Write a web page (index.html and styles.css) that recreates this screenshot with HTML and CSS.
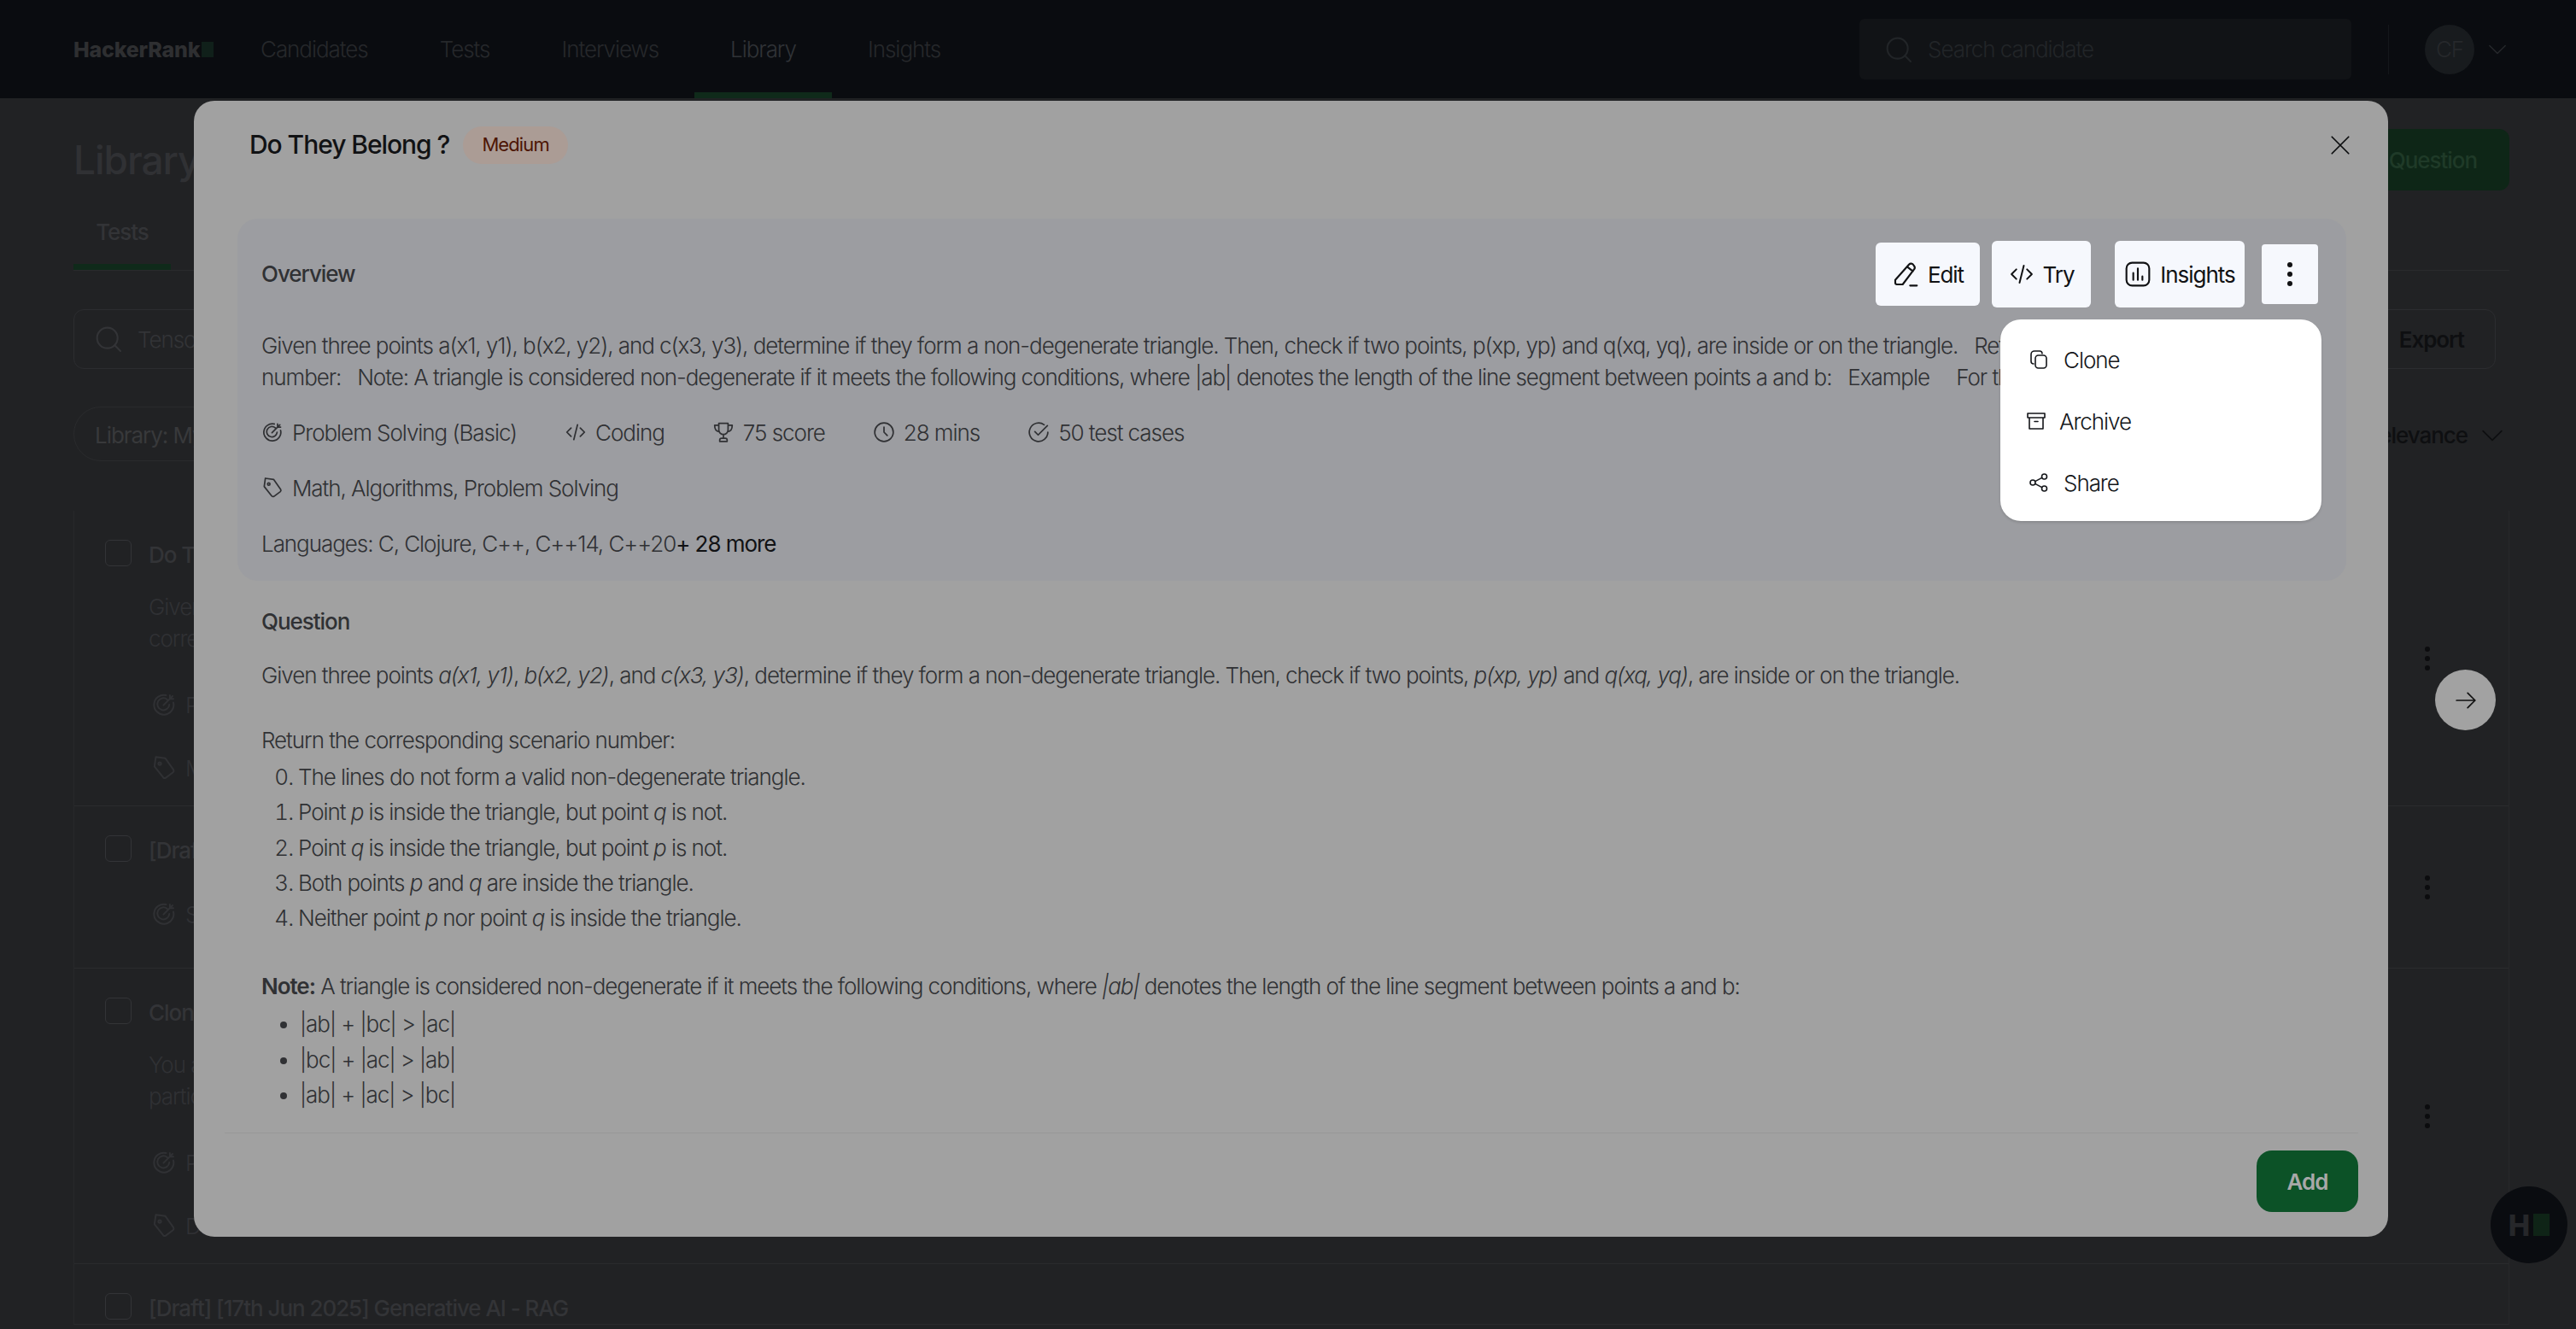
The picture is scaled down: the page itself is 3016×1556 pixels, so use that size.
FILE: index.html
```html
<!DOCTYPE html>
<html lang="en">

<head>
  <meta charset="UTF-8">
  <title>Library - HackerRank</title>
  <link rel="stylesheet" href="styles.css">
</head>

<body>
  <svg class="sprite" width="0" height="0">
    <symbol id="i-target" viewBox="0 0 24 24"><path d="M14 3.2A9.2 9.2 0 1 0 20.8 10M15 7.2A5.6 5.6 0 1 0 17 12M11.5 12.5 20 4M17.5 3.2v3.3h3.3"/></symbol>
    <symbol id="i-code" viewBox="0 0 24 24"><path d="M7 7.5 2.5 12 7 16.500M17 7.500 21.500 12 17 16.500M14 4l-4 16"/></symbol>
    <symbol id="i-trophy" viewBox="0 0 24 24"><path d="M7 2.500h10v7a5 5 0 0 1-10 0zM7 4.500H2.500c0 4 1.500 6.500 5 7M17 4.500h4.500c0 4-1.500 6.500-5 7M12 14.500v4M8 22v-1.500a2 2 0 0 1 2-2h4a2 2 0 0 1 2 2V22z"/></symbol>
    <symbol id="i-clock" viewBox="0 0 24 24"><circle cx="12" cy="12" r="10"/><path d="M12 6.500V12l3.500 3.500"/></symbol>
    <symbol id="i-check" viewBox="0 0 24 24"><path d="M18 4A10 10 0 1 0 22 12M8 11.500l3.500 3.500L21.500 5"/></symbol>
    <symbol id="i-tag" viewBox="0 0 24 24"><path d="M3 3h9l9 9.500a2 2 0 0 1 0 2.500l-6 6a2 2 0 0 1-2.500 0L3 12z" transform="rotate(8 12 12)"/><circle cx="8" cy="8" r="1.300"/></symbol>
    <symbol id="i-pen" viewBox="0 0 24 24"><path d="M15 3.500a2.500 2.500 0 0 1 4 .5l.7 1a2.500 2.500 0 0 1-.5 3.200L9.500 21H4.500a1.500 1.500 0 0 1-1.500-1.500V17zM13.500 5.500l5 4M16 22h6"/></symbol>
    <symbol id="i-chart" viewBox="0 0 24 24"><rect x="2" y="2" width="20" height="20" rx="5"/><path d="M8 11v6M12 7v10M16 14v3"/></symbol>
    <symbol id="i-copy" viewBox="0 0 24 24"><path d="M6 17A3 3 0 0 1 3 14V6a4 4 0 0 1 4-4h6a3 3 0 0 1 3 3"/><rect x="8" y="7" width="13" height="15" rx="3.500"/></symbol>
    <symbol id="i-archive" viewBox="0 0 24 24"><path d="M2 3h20v5H2zM4 8v13h16V8M10 12.500h4"/></symbol>
    <symbol id="i-share" viewBox="0 0 24 24"><circle cx="5" cy="12" r="3"/><circle cx="18.500" cy="5" r="3"/><circle cx="18.500" cy="19" r="3"/><path d="m7.700 10.600 8-4.200M7.700 13.400l8 4.200"/></symbol>
    <symbol id="i-search" viewBox="0 0 24 24"><circle cx="11" cy="11" r="9"/><path d="m17.500 17.500 5 5"/></symbol>
    <symbol id="i-chevron" viewBox="0 0 24 24"><path d="m2 7 10 10L22 7"/></symbol>
    <symbol id="i-close" viewBox="0 0 24 24"><path d="M3 3l18 18M21 3 3 21"/></symbol>
    <symbol id="i-arrow" viewBox="0 0 24 24"><path d="M2 12h20M14 4l8 8-8 8"/></symbol>
  </svg>

  <!-- page behind the modal -->
  <header class="topbar">
    <div class="logo">HackerRank<span class="logo-mark"></span></div>
    <nav class="topnav">
      <a>Candidates</a>
      <a>Tests</a>
      <a>Interviews</a>
      <a class="active">Library</a>
      <a>Insights</a>
    </nav>
    <div class="top-search">
      <svg class="icon"><use href="#i-search"/></svg>
      <span>Search candidate</span>
    </div>
    <div class="top-sep"></div>
    <div class="avatar">CF</div>
    <svg class="icon top-chevron"><use href="#i-chevron"/></svg>
  </header>

  <main class="library">
    <div class="library-head">
      <h1>Library</h1>
      <button class="create-btn">Create Question</button>
    </div>
    <div class="tabs"><span class="tab">Tests</span></div>

    <div class="search-row">
      <svg class="icon"><use href="#i-search"/></svg>
      <span class="search-text">Tensorflow</span>
      <span class="export">Export</span>
    </div>

    <div class="filter-row">
      <span class="chip">Library: My Company</span>
      <span class="sort">Relevance <svg class="icon"><use href="#i-chevron"/></svg></span>
    </div>

    <div class="rows">
      <div class="row">
        <span class="checkbox"></span>
        <div class="row-body">
          <div class="row-title">Do They Belong ?</div>
          <p class="row-desc">Given three points a(x1, y1), b(x2, y2), and c(x3, y3), determine if they form a triangle.<br>corresponding scenario number</p>
          <div class="row-meta first"><svg class="icon"><use href="#i-target"/></svg><span>Problem Solving (Basic)</span></div>
          <div class="row-meta"><svg class="icon"><use href="#i-tag"/></svg><span>Math, Algorithms</span></div>
        </div>
        <span class="row-kebab"><i></i><i></i><i></i></span>
      </div>
      <div class="row">
        <span class="checkbox"></span>
        <div class="row-body">
          <div class="row-title">[Draft] Software Engineer</div>
          <div class="row-meta after-title"><svg class="icon"><use href="#i-target"/></svg><span>Software Engineering</span></div>
        </div>
        <span class="row-kebab"><i></i><i></i><i></i></span>
      </div>
      <div class="row">
        <span class="checkbox"></span>
        <div class="row-body">
          <div class="row-title">Clone of Test</div>
          <p class="row-desc">You are given a list of tasks<br>particular order</p>
          <div class="row-meta first"><svg class="icon"><use href="#i-target"/></svg><span>Problem Solving</span></div>
          <div class="row-meta"><svg class="icon"><use href="#i-tag"/></svg><span>Data Structures</span></div>
        </div>
        <span class="row-kebab"><i></i><i></i><i></i></span>
      </div>
      <div class="row">
        <span class="checkbox"></span>
        <div class="row-body">
          <div class="row-title">[Draft] [17th Jun 2025] Generative AI - RAG</div>
        </div>
      </div>
    </div>
  </main>

  <button class="next-btn"><svg class="icon"><use href="#i-arrow"/></svg></button>
  <div class="chat-widget">H<span class="chat-mark"></span></div>

  <!-- question modal -->
  <section class="modal">
    <div class="modal-head">
      <h2>Do They Belong ?</h2>
      <span class="badge">Medium</span>
      <svg class="icon modal-close"><use href="#i-close"/></svg>
    </div>

    <div class="modal-body">
      <div class="overview">
        <div class="overview-head">
          <h3>Overview</h3>
          <div class="actions">
            <button class="action edit"><svg class="icon"><use href="#i-pen"/></svg>Edit</button>
            <button class="action try"><svg class="icon"><use href="#i-code"/></svg>Try</button>
            <button class="action insights"><svg class="icon"><use href="#i-chart"/></svg>Insights</button>
            <button class="action more"><i></i><i></i><i></i></button>
          </div>
        </div>
        <p class="overview-text">Given three points a(x1, y1), b(x2, y2), and c(x3, y3), determine if they form a non-degenerate triangle. Then, check if two points, p(xp, yp) and q(xq, yq), are inside or on the triangle. &nbsp; Return the corresponding<br>number: &nbsp; Note: A triangle is considered non-degenerate if it meets the following conditions, where |ab| denotes the length of the line segment between points a and b: &nbsp; Example &nbsp; &nbsp; For the points</p>
        <div class="meta">
          <span class="meta-item"><svg class="icon"><use href="#i-target"/></svg>Problem Solving (Basic)</span>
          <span class="meta-item"><svg class="icon"><use href="#i-code"/></svg>Coding</span>
          <span class="meta-item"><svg class="icon"><use href="#i-trophy"/></svg>75 score</span>
          <span class="meta-item"><svg class="icon"><use href="#i-clock"/></svg>28 mins</span>
          <span class="meta-item"><svg class="icon"><use href="#i-check"/></svg>50 test cases</span>
        </div>
        <div class="meta tags">
          <span class="meta-item"><svg class="icon"><use href="#i-tag"/></svg>Math, Algorithms, Problem Solving</span>
        </div>
        <div class="meta langs">Languages: C, Clojure, C++, C++14, C++20<b>+ 28 more</b></div>

        <div class="dropdown">
          <div class="drop-item"><svg class="icon"><use href="#i-copy"/></svg>Clone</div>
          <div class="drop-item archive"><svg class="icon"><use href="#i-archive"/></svg>Archive</div>
          <div class="drop-item"><svg class="icon"><use href="#i-share"/></svg>Share</div>
        </div>
      </div>

      <div class="question">
        <h3>Question</h3>
        <p class="q-first">Given three points <em>a(x1, y1)</em>, <em>b(x2, y2)</em>, and <em>c(x3, y3)</em>, determine if they form a non-degenerate triangle. Then, check if two points, <em>p(xp, yp)</em> and <em>q(xq, yq)</em>, are inside or on the triangle.</p>
        <p class="q-return">Return the corresponding scenario number:</p>
        <ol start="0">
          <li>The lines do not form a valid non-degenerate triangle.</li>
          <li>Point <em>p</em> is inside the triangle, but point <em>q</em> is not.</li>
          <li>Point <em>q</em> is inside the triangle, but point <em>p</em> is not.</li>
          <li>Both points <em>p</em> and <em>q</em> are inside the triangle.</li>
          <li>Neither point <em>p</em> nor point <em>q</em> is inside the triangle.</li>
        </ol>
        <p class="q-note"><strong>Note:</strong> A triangle is considered non-degenerate if it meets the following conditions, where <em>|ab|</em> denotes the length of the line segment between points a and b:</p>
        <ul>
          <li>|ab| + |bc| &gt; |ac|</li>
          <li>|bc| + |ac| &gt; |ab|</li>
          <li>|ab| + |ac| &gt; |bc|</li>
        </ul>
      </div>
    </div>

    <div class="modal-foot">
      <button class="add-btn">Add</button>
    </div>
  </section>
</body>

</html>
```

FILE: styles.css
```css
* {
  box-sizing: border-box;
}

body {
  margin: 0;
  width: 3016px;
  height: 1556px;
  overflow: hidden;
  position: relative;
  background: #212224;
  font-family: Inter, "Noto Sans", sans-serif;
  font-size: 26px;
  font-weight: 300;
  letter-spacing: -1.05px;
  color: #303134;
}

h1, h2, h3, p {
  margin: 0;
}

button {
  font-family: inherit;
  letter-spacing: inherit;
  border: none;
  padding: 0;
}

.sprite {
  position: absolute;
}

.icon {
  width: 26px;
  height: 26px;
  flex: none;
  fill: none;
  stroke: currentColor;
  stroke-width: 1.6;
  stroke-linecap: round;
  stroke-linejoin: round;
}

/* Top bar */
.topbar {
  height: 115px;
  background: #0a0c10;
  display: flex;
  align-items: center;
  padding-left: 86px;
  color: #26282b;
}

.logo {
  width: 177px;
  font-size: 25px;
  font-weight: 800;
  letter-spacing: -0.2px;
  color: #2e2f31;
  display: flex;
  align-items: center;
}

.logo-mark {
  width: 14px;
  height: 18px;
  margin-left: 2px;
  background: #10201a;
}

.topnav {
  display: flex;
  height: 100%;
  align-items: center;
}

.topnav a {
  height: 100%;
  display: flex;
  align-items: center;
  padding: 7px 42px 0;
  border-bottom: 7px solid transparent;
}

.topnav a.active {
  color: #303337;
  border-bottom-color: #0f2a1a;
}

.top-search {
  margin-left: auto;
  width: 576px;
  height: 71px;
  background: #111316;
  border-radius: 6px;
  display: flex;
  align-items: center;
  gap: 18px;
  padding-left: 30px;
  color: #222528;
}

.top-search .icon {
  width: 32px;
  height: 32px;
}

.top-sep {
  width: 1px;
  height: 58px;
  background: #15171a;
  margin-left: 43px;
}

.avatar {
  width: 58px;
  height: 58px;
  margin-left: 42px;
  border-radius: 50%;
  background: #181b1e;
  display: flex;
  align-items: center;
  justify-content: center;
}

.top-chevron {
  width: 22px;
  height: 22px;
  margin: 0 81px 0 16px;
}

/* Library page */
.library {
  padding: 36px 78px 0 86px;
}

.library-head {
  display: flex;
  justify-content: space-between;
  align-items: center;
}

.library-head h1 {
  font-size: 46px;
  font-weight: 500;
  color: #303134;
}

.create-btn {
  width: 320px;
  height: 72px;
  padding-right: 38px;
  text-align: right;
  border-radius: 12px;
  background: #0e2617;
  color: #1f3a28;
  font-size: 26px;
  font-weight: 500;
}

.tabs {
  height: 94px;
  border-bottom: 1px solid #2a2b2d;
  display: flex;
  align-items: flex-end;
}

.tab {
  width: 114px;
  height: 72px;
  padding-top: 12px;
  text-align: center;
  font-weight: 500;
  color: #333437;
  border-bottom: 7px solid #0f2a1a;
}

.search-row {
  margin: 45px 16px 0 0;
  height: 70px;
  border: 1px solid #2c2d30;
  border-radius: 12px;
  display: flex;
  align-items: center;
  padding: 0 36px 0 24px;
  color: #333437;
}

.search-row .icon {
  width: 32px;
  height: 32px;
}

.search-text {
  margin-left: 18px;
}

.export {
  margin-left: auto;
  font-weight: 600;
  color: #0e0f11;
}

.filter-row {
  margin-top: 44px;
  height: 64px;
  display: flex;
  align-items: center;
  justify-content: space-between;
}

.chip {
  height: 64px;
  padding: 3px 24px 0;
  border: 1px solid #2a2b2d;
  border-radius: 32px;
  display: flex;
  align-items: center;
  font-weight: 400;
  color: #38393b;
}

.sort {
  display: flex;
  align-items: center;
  gap: 16px;
  padding-top: 3px;
  font-weight: 500;
  color: #0e0f11;
  margin-right: 7px;
}

.rows {
  margin-top: 58px;
  border-left: 1px solid #27282a;
  border-right: 1px solid #27282a;
}

.row {
  display: flex;
  align-items: flex-start;
  padding: 34px 0 0 36px;
  border-bottom: 1px solid #2a2b2d;
  position: relative;
}

.checkbox {
  width: 31px;
  height: 31px;
  border: 1px solid #333437;
  border-radius: 6px;
  flex: none;
}

.row-body {
  margin-left: 20px;
  flex: 1;
}

.row-title {
  height: 36px;
  line-height: 36px;
  font-weight: 500;
  color: #333437;
}

.row-desc {
  margin-top: 24px;
  line-height: 37px;
  color: #303134;
}

.row-meta {
  display: flex;
  align-items: center;
  gap: 10px;
  height: 36px;
  margin: 38px 0 0 3px;
}

.row-meta .icon {
  width: 30px;
  height: 30px;
}

.row-meta.first {
  margin-top: 41px;
}

.row-meta:last-child {
  margin-bottom: 26px;
}

.row-meta.after-title:last-child {
  margin-bottom: 45px;
}

.row-kebab {
  align-self: center;
  margin: -34px 92px 0 0;
  display: flex;
  flex-direction: column;
  gap: 5px;
}

.row-kebab i {
  width: 6px;
  height: 6px;
  border-radius: 50%;
  background: #0b0c0e;
}

.next-btn {
  position: absolute;
  left: 2851px;
  top: 784px;
  width: 71px;
  height: 71px;
  border-radius: 50%;
  background: #a2a2a2;
  color: #111;
  display: flex;
  align-items: center;
  justify-content: center;
}

.chat-widget {
  position: absolute;
  left: 2916px;
  top: 1389px;
  width: 90px;
  height: 90px;
  border-radius: 50%;
  background: #0a0c10;
  color: #26272a;
  font-size: 34px;
  font-weight: 800;
  letter-spacing: 0;
  display: flex;
  align-items: center;
  justify-content: center;
}

.chat-mark {
  width: 19px;
  height: 26px;
  margin-left: 4px;
  background: #0f2417;
}

/* Modal */
.modal {
  position: absolute;
  left: 227px;
  top: 118px;
  width: 2569px;
  height: 1330px;
  background: #a1a1a1;
  border-radius: 24px;
  overflow: hidden;
  display: flex;
  flex-direction: column;
}

.modal-head {
  height: 138px;
  flex: none;
  display: flex;
  align-items: flex-start;
  padding: 30px 43px 0 65px;
}

.modal-head h2 {
  font-size: 30px;
  font-weight: 500;
  line-height: 42px;
  color: #111214;
}

.badge {
  margin: 0 0 0 16px;
  height: 44px;
  padding: 0 22px;
  border-radius: 22px;
  background: #ab9c95;
  color: #4d1505;
  font-size: 22px;
  font-weight: 400;
  letter-spacing: -0.9px;
  line-height: 43px;
}

.modal-close {
  margin: 9px 0 0 auto;
  color: #0b0c0e;
}

.modal-body {
  flex: 1;
  overflow: hidden;
  margin: 0 49px 0 51px;
}

.overview {
  position: relative;
  height: 424px;
  padding: 26px 33px 0 28px;
  background: #9c9da1;
  border-radius: 24px;
}

.overview-head {
  display: flex;
  justify-content: space-between;
  align-items: center;
  height: 78px;
}

h3 {
  font-size: 26px;
  font-weight: 500;
  line-height: 36px;
  color: #303134;
}

.actions {
  display: flex;
  align-items: center;
}

.action {
  background: #f6f8fd;
  border-radius: 6px;
  display: flex;
  align-items: center;
  justify-content: center;
  gap: 10px;
  color: #111214;
  font-size: 26px;
  font-weight: 400;
}

.action .icon {
  width: 32px;
  height: 32px;
}

.edit {
  width: 122px;
  height: 74px;
}

.try {
  width: 116px;
  height: 78px;
  margin-left: 14px;
}

.try .icon {
  width: 30px;
  height: 30px;
}

.insights {
  width: 152px;
  height: 78px;
  margin-left: 28px;
}

.more {
  width: 66px;
  height: 70px;
  margin-left: 20px;
  flex-direction: column;
  gap: 5px;
  border-radius: 4px;
}

.more i {
  width: 6px;
  height: 6px;
  border-radius: 50%;
  background: #111214;
}

.overview-text {
  margin-top: 26px;
  height: 74px;
  line-height: 37px;
  white-space: nowrap;
  overflow: hidden;
}

.meta {
  display: flex;
  gap: 56px;
  height: 36px;
  align-items: center;
  margin-top: 28px;
}

.tags {
  margin-top: 29px;
}

.langs {
  margin-top: 29px;
  gap: 0;
}

.langs b {
  font-weight: 400;
  color: #111214;
}

.meta-item {
  display: flex;
  align-items: center;
  gap: 10px;
}

.dropdown {
  position: absolute;
  left: 2064px;
  top: 118px;
  width: 376px;
  height: 236px;
  padding-top: 11px;
  background: #fff;
  border-radius: 24px;
  box-shadow: 0 2px 3px rgba(0, 0, 0, 0.12);
  color: #14161a;
}

.drop-item {
  height: 72px;
  display: flex;
  align-items: center;
  gap: 17px;
  padding-left: 33px;
}

.drop-item .icon {
  width: 24px;
  height: 24px;
  stroke-width: 1.6;
}

.drop-item.archive {
  padding-left: 30px;
  gap: 15px;
}

.question {
  padding-left: 28px;
  line-height: 37px;
}

.question h3 {
  margin-top: 30px;
}

.q-first {
  margin-top: 26px;
}

.q-return {
  margin-top: 39px;
}

.question ol, .question ul {
  margin: 4px 0 0;
  padding-left: 43px;
}

.question ul {
  margin-top: 5px;
  padding-left: 45px;
}

.question li {
  line-height: 41.300px;
}

.q-note {
  margin-top: 41px;
}

.q-note strong {
  font-weight: 600;
}

.modal-foot {
  flex: none;
  height: 122px;
  margin: 0 35px 0 36px;
  border-top: 1px solid #989898;
  display: flex;
  justify-content: flex-end;
  padding-top: 20px;
}

.add-btn {
  width: 119px;
  height: 72px;
  border-radius: 18px;
  background: #0c5227;
  color: #a8a8a8;
  font-size: 26px;
  font-weight: 600;
}
```
